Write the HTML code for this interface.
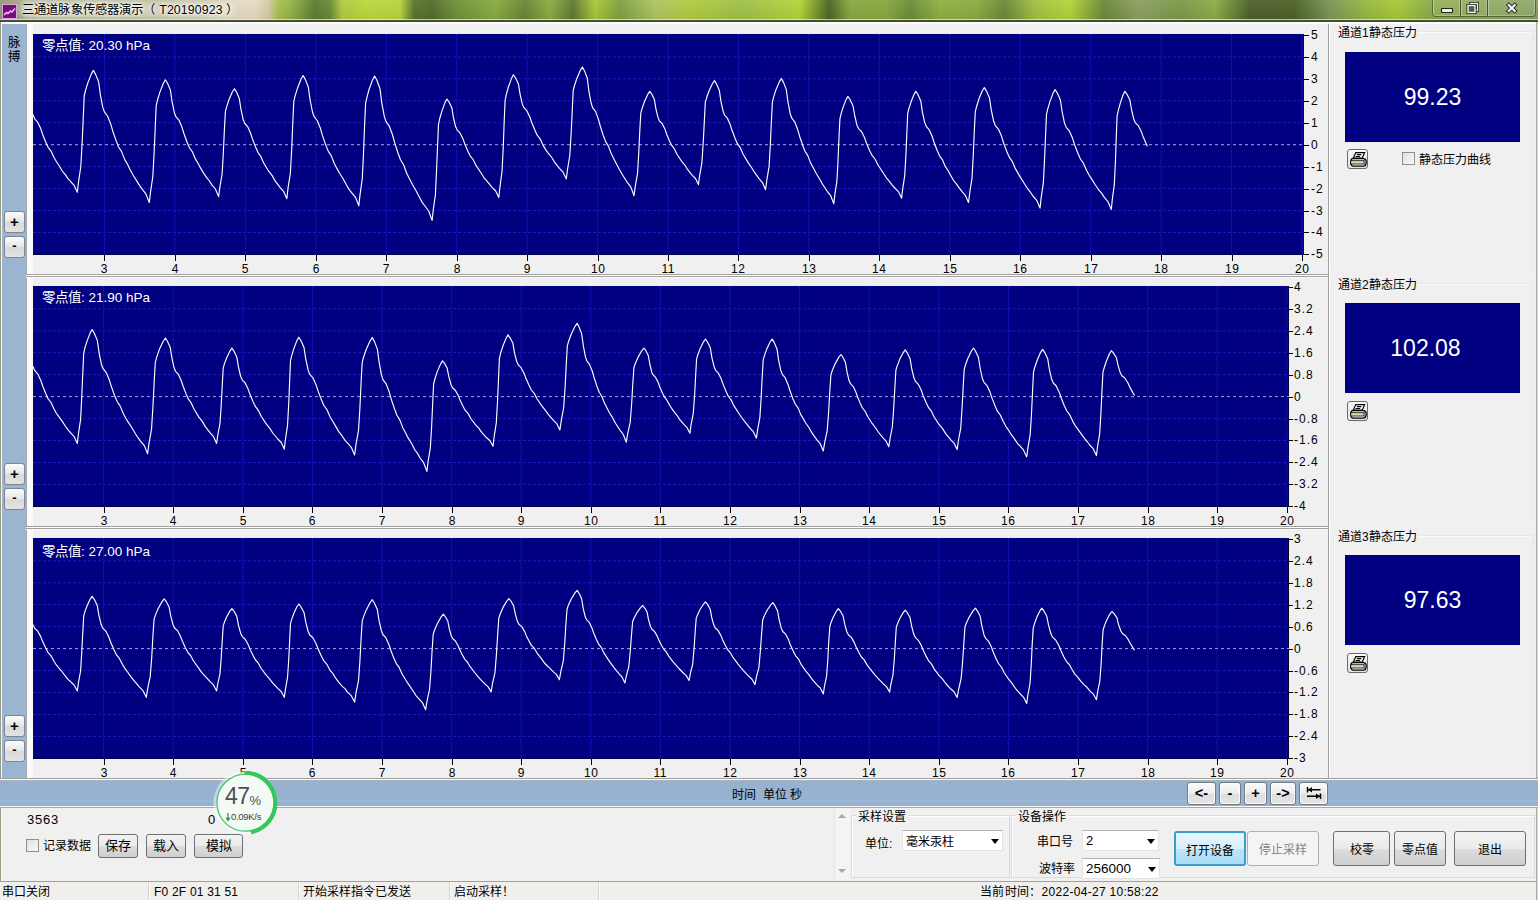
<!DOCTYPE html>
<html lang="zh-CN"><head><meta charset="utf-8">
<style>
*{margin:0;padding:0;box-sizing:border-box}
html,body{width:1538px;height:900px;overflow:hidden;background:#f0f0f0;font-family:"Liberation Sans", sans-serif;font-size:12px;color:#000}
.a{position:absolute}
#title{position:absolute;left:0;top:0;width:1538px;height:22px;
background:linear-gradient(90deg,#96987a 0px,#a4a484 15px,#acac8c 60px,#b4b294 150px,#c4c0a4 205px,#e4dcc4 235px,#e8dcc0 255px,#d4cca8 268px,#a8c050 278px,#98b448 290px,#7a9a3c 302px,#5c7c30 315px,#6a8a34 330px,#b0cc40 342px,#bcd83c 370px,#b8d440 400px,#5c742c 414px,#546c2c 432px,#6c9038 455px,#88ac40 495px,#6c8434 525px,#8cac40 550px,#607830 573px,#a8c838 595px,#80a040 620px,#aec460 655px,#b0cc40 690px,#a0c048 740px,#b4d438 800px,#4c6424 829px,#88a840 850px,#8aa840 885px,#6c8c38 910px,#90b040 940px,#8cac40 975px,#6c8838 1005px,#a0c040 1035px,#b4d438 1070px,#6c8838 1104px,#8ca060 1140px,#7c9848 1180px,#8cac48 1215px,#4c6028 1250px,#4e6229 1295px,#7c9458 1330px,#98b840 1367px,#a8c838 1398px,#8cac48 1428px,#8ca858 1480px,#88a060 1538px)}
#title:before{content:"";position:absolute;left:0;top:0;width:1538px;height:19px;background:linear-gradient(rgba(255,255,255,.06),rgba(0,0,0,.05))}
#tglow{position:absolute;left:20px;top:1px;width:215px;height:18px;border-radius:9px;background:rgba(235,235,220,.55);filter:blur(3px)}
#title:after{content:"";position:absolute;left:0;top:19px;width:1538px;height:3px;background:linear-gradient(rgba(230,240,200,.7) 33%,#505838 34%,#3c4430)}
#ttext{position:absolute;left:22px;top:3px;font-size:12.3px;line-height:15px;letter-spacing:0.15px;color:#000;text-shadow:0 0 6px #fff,0 0 4px #fff,0 0 2px #fff;white-space:nowrap}
#icon{position:absolute;left:2px;top:4px;width:15px;height:15px;background:#7a0a82;border:1px solid #d8a8d8}
.capb{position:absolute;top:0;height:17px;border:1px solid rgba(40,50,20,.55);border-top:none;background:rgba(255,255,255,.08);box-shadow:inset 1px 0 0 rgba(255,255,255,.35),inset -1px -1px 0 rgba(255,255,255,.25)}
#frameL{position:absolute;left:0;top:22px;width:2px;height:878px;background:linear-gradient(90deg,#9c9a84 50%,#f8f8f8 50%)}
#frameR{position:absolute;left:1536px;top:22px;width:2px;height:878px;background:linear-gradient(90deg,#909088,#f4f4f4)}
#side{position:absolute;left:2px;top:24px;width:24px;height:756px;background:#9bb4d0}
#sidetxt{position:absolute;left:8px;top:36px;width:14px;font-size:12.5px;line-height:14px;color:#000}
.sbtn{position:absolute;left:4px;width:21px;height:22px;border:1px solid #7a8694;border-radius:3px;background:linear-gradient(#fbfbfb,#e6e6e6 50%,#d9d9d9 51%,#e4e4e4);font-size:15px;font-weight:bold;line-height:19px;text-align:center;color:#000}
.sbtn.m{font-size:13px;line-height:18px}
.panel{position:absolute;left:26px;width:1303px;height:252px;background:#f0f0f0;border-left:1px solid #a4a8b0;box-shadow:inset 6px 0 0 #fafafa}
.psep{position:absolute;left:26px;width:1303px;height:4px;background:linear-gradient(#a0a0a0 25%,#fff 25%,#fff 50%,#a0a0a0 50%,#a0a0a0 75%,#fafafa 75%)}
.chart{position:absolute;background:#000080;overflow:hidden;border-bottom:1px solid #000048}
.chart svg{position:absolute;left:0;top:0}
.g{stroke:#1a1abc;stroke-width:1;stroke-dasharray:3 2}
.gv{stroke:#1616b8;stroke-width:1;stroke-dasharray:3 1}
.z{stroke:#a4a4f0;stroke-width:1;stroke-dasharray:3 3}
.w{fill:none;stroke:#fff;stroke-width:1.15;stroke-linejoin:round}
.tk{position:absolute;width:5px;height:1px;background:#000}
.tkb{position:absolute;width:1px;height:6px;background:#000}
.yl{position:absolute;font-size:12px;line-height:14px;color:#000;white-space:nowrap;letter-spacing:1px}
.xl{position:absolute;width:40px;text-align:center;font-size:12px;line-height:14px;color:#000;letter-spacing:0.4px;text-indent:0.4px}
.zval{position:absolute;left:42px;font-size:13.5px;line-height:14px;color:#fff;white-space:nowrap}
#rpanel{position:absolute;left:1328px;top:24px;width:208px;height:756px;background:#f0f0f0;border-left:1px solid #a0a0a0}
#rpanel:before{content:"";position:absolute;left:0;top:0;width:1px;height:758px;background:#fff}
.gbox{position:absolute;left:1333px;width:200px;border:1px solid #e6e6e6;border-bottom:none;box-shadow:inset 1px 1px 0 #fafafa}
.gtitle{background:#f0f0f0;padding:0 1px}
.gtitle{position:absolute;left:1337px;font-size:12px;line-height:14px;margin-top:1px;color:#000;white-space:nowrap}
.disp{position:absolute;left:1345px;width:175px;height:90px;background:#000080;color:#fff;font-size:23px;text-align:center;line-height:90px}
.pbtn{position:absolute;left:1347px;width:21px;height:20px;border:1px solid #6a6a6a;border-radius:3px;background:linear-gradient(#f8f8f8,#e4e4e4)}
.pbtn svg{position:absolute;left:1.5px;top:1.5px}
.chk{position:absolute;width:13px;height:13px;border:1px solid #8f8f8f;background:linear-gradient(135deg,#e0e0e0,#fafafa)}
.txt{position:absolute;font-size:12px;line-height:14px;white-space:nowrap;color:#000;margin-top:1px}
#tbar{position:absolute;left:0;top:778px;width:1538px;height:30px;background:linear-gradient(#a0a0a0 0,#a0a0a0 1px,#fafafa 1px,#fafafa 2px,#a8b4c0 2px,#a8b4c0 3px,#97b1d0 3px,#97b1d0 22px,#9cb6d6 22px,#9cb6d6 24px,#97b1d0 24px,#97b1d0 27px,#a4acb4 27px,#a4acb4 28px,#fafafa 28px,#fafafa 29px,#a8a8a8 29px)}
.nbtn{position:absolute;top:782px;height:23px;border:1px solid #6f7c8a;border-radius:3px;background:linear-gradient(#fafafa,#ececec 50%,#dcdcdc 51%,#e6e6e6);font-weight:bold;font-size:14.5px;line-height:20px;text-align:center;color:#000;box-shadow:inset 0 0 0 1px rgba(255,255,255,.8)}
.btn{position:absolute;height:35px;border:1px solid #707070;border-radius:3px;background:linear-gradient(#f2f2f2,#ebebeb 50%,#dddddd 51%,#cfcfcf);font-size:12px;line-height:36px;text-align:center;color:#000}
.sbtn2{position:absolute;top:834px;height:24px;border:1px solid #707070;border-radius:3px;background:linear-gradient(#f2f2f2,#ebebeb 50%,#dddddd 51%,#cfcfcf);font-size:13px;line-height:22px;text-align:center;color:#000}
.combo{position:absolute;height:21px;background:#fff;border:1px solid #e4e4e4;border-top-color:#b0b0b0;font-size:13px;line-height:19px;padding-left:3px;white-space:nowrap}
.combo:after{content:"";position:absolute;right:3px;top:8px;border-left:4px solid transparent;border-right:4px solid transparent;border-top:5px solid #000}
.grp{position:absolute;border:1px solid #dcdcdc;box-shadow:inset 1px 1px 0 #fff}
#status{position:absolute;left:0;top:881px;width:1536px;height:19px;background:#f0efec;border-top:1px solid #a0a0a0}
.st{position:absolute;top:885px;font-size:12px;line-height:14px;white-space:nowrap;color:#000}
</style></head><body>
<div id="title"><div id="icon"><svg width="13" height="13" viewBox="0 0 13 13" style="position:absolute;left:0;top:0"><path d="M1 10 L3.5 7.5 L5 8.5 L7.5 6 L9 7 L12 3.5" fill="none" stroke="#f0c8f0" stroke-width="1.5"/></svg></div>
<div id="tglow"></div><div id="ttext">三通道脉象传感器演示（ T20190923 ）</div>
<div class="capb" style="left:1432px;width:29px;border-radius:0 0 0 4px"></div><div class="capb" style="left:1460px;width:28px"></div><div class="capb" style="left:1487px;width:49px;border-radius:0 0 4px 0"></div>
<svg class="a" style="left:1432px;top:0" width="104" height="18" viewBox="0 0 104 18">
<rect x="9.5" y="8.5" width="11" height="4" fill="#eeeefa" stroke="#202818" stroke-width="1.2" rx="0.8"/>
<rect x="38.5" y="3.5" width="7" height="7" fill="none" stroke="#202818" stroke-width="3"/><rect x="38.5" y="3.5" width="7" height="7" fill="none" stroke="#eeeefa" stroke-width="1.4"/>
<rect x="36" y="5.5" width="7" height="7" fill="#52603a" stroke="#202818" stroke-width="3"/><rect x="36" y="5.5" width="7" height="7" fill="#52603a" stroke="#eeeefa" stroke-width="1.4"/>
<path d="M76.8 5 L82.8 11 M82.8 5 L76.8 11" stroke="#202818" stroke-width="4" stroke-linecap="square"/><path d="M76.8 5 L82.8 11 M82.8 5 L76.8 11" stroke="#f4f4fc" stroke-width="2.2" stroke-linecap="square"/>
</svg>
</div>
<div id="frameL"></div><div id="frameR"></div><div class="a" style="left:2px;top:22px;width:1534px;height:2px;background:#fbfbfb"></div>
<div id="side"></div>
<div id="sidetxt">脉<br>搏</div>
<div class="sbtn" style="top:211px">+</div><div class="sbtn m" style="top:236px">-</div><div class="sbtn" style="top:463px">+</div><div class="sbtn m" style="top:488px">-</div><div class="sbtn" style="top:715px">+</div><div class="sbtn m" style="top:740px">-</div>
<div class="panel" style="top:24px;height:250px"></div>
<div class="panel" style="top:277px"></div>
<div class="panel" style="top:529px"></div>
<div class="psep" style="top:274px"></div>
<div class="psep" style="top:526px"></div>
<div class="chart" style="left:33px;top:34px;width:1271px;height:221px"><svg width="1271" height="221" viewBox="0 0 1271 221"><line x1="0" y1="198.5" x2="1271.0" y2="198.5" class="g"/><line x1="0" y1="176.5" x2="1271.0" y2="176.5" class="g"/><line x1="0" y1="154.6" x2="1271.0" y2="154.6" class="g"/><line x1="0" y1="132.6" x2="1271.0" y2="132.6" class="g"/><line x1="0" y1="88.7" x2="1271.0" y2="88.7" class="g"/><line x1="0" y1="66.8" x2="1271.0" y2="66.8" class="g"/><line x1="0" y1="44.8" x2="1271.0" y2="44.8" class="g"/><line x1="0" y1="22.9" x2="1271.0" y2="22.9" class="g"/><line x1="71.5" y1="0" x2="71.5" y2="221.0" class="gv"/><line x1="141.9" y1="0" x2="141.9" y2="221.0" class="gv"/><line x1="212.4" y1="0" x2="212.4" y2="221.0" class="gv"/><line x1="282.8" y1="0" x2="282.8" y2="221.0" class="gv"/><line x1="353.3" y1="0" x2="353.3" y2="221.0" class="gv"/><line x1="423.7" y1="0" x2="423.7" y2="221.0" class="gv"/><line x1="494.1" y1="0" x2="494.1" y2="221.0" class="gv"/><line x1="564.6" y1="0" x2="564.6" y2="221.0" class="gv"/><line x1="635.0" y1="0" x2="635.0" y2="221.0" class="gv"/><line x1="705.5" y1="0" x2="705.5" y2="221.0" class="gv"/><line x1="775.9" y1="0" x2="775.9" y2="221.0" class="gv"/><line x1="846.3" y1="0" x2="846.3" y2="221.0" class="gv"/><line x1="916.8" y1="0" x2="916.8" y2="221.0" class="gv"/><line x1="987.2" y1="0" x2="987.2" y2="221.0" class="gv"/><line x1="1057.7" y1="0" x2="1057.7" y2="221.0" class="gv"/><line x1="1128.1" y1="0" x2="1128.1" y2="221.0" class="gv"/><line x1="1198.5" y1="0" x2="1198.5" y2="221.0" class="gv"/><line x1="1269.0" y1="0" x2="1269.0" y2="221.0" class="gv"/><line x1="0" y1="110.7" x2="1271.0" y2="110.7" class="z"/><g transform="translate(-33,-34)"><path d="M33.0,114.3 33.2,115.2 34.8,119.1 37.7,122.2 40.7,128.6 42.7,134.5 45.7,142.0 48.1,147.3 51.0,151.1 54.0,157.5 56.5,161.8 59.0,165.5 62.3,171.0 65.6,175.2 68.2,178.9 70.7,181.6 74.1,185.3 77.3,192.3 78.6,181.3 80.8,166.7 82.1,143.5 83.3,116.7 84.2,96.0 85.5,90.5 87.9,82.6 91.3,74.1 93.4,70.4 95.6,74.4 98.7,82.0 100.4,95.2 102.8,107.4 104.5,112.1 107.5,116.0 110.7,123.9 112.8,131.2 116.0,140.4 118.6,147.0 121.6,151.6 124.7,159.6 127.4,164.0 130.0,169.5 133.5,175.8 137.0,181.4 139.7,185.6 142.3,189.3 145.9,193.9 149.3,202.5 150.6,191.5 152.8,176.7 154.1,153.4 155.3,126.4 156.2,105.6 157.5,100.0 159.9,92.1 163.3,83.5 165.4,79.8 167.5,83.3 170.4,90.1 172.1,101.8 174.3,112.5 175.9,116.7 178.9,120.1 181.9,127.1 183.9,133.5 186.9,141.7 189.3,147.5 192.2,151.6 195.2,158.6 197.7,162.8 200.2,167.4 203.6,173.1 206.9,177.9 209.4,181.0 211.9,184.9 215.4,189.0 218.6,196.6 219.9,186.9 222.1,174.0 223.3,153.5 224.4,129.8 225.4,111.4 226.7,106.6 229.0,99.6 232.3,92.0 234.4,88.8 236.5,92.1 239.3,98.5 241.0,109.5 243.2,119.6 244.8,123.5 247.7,126.7 250.6,133.3 252.6,139.4 255.6,147.0 258.0,152.5 260.8,156.4 263.7,163.0 268.7,171.2 272.0,175.4 275.3,181.1 280.2,187.7 283.7,191.6 286.8,198.7 288.1,187.6 290.4,172.8 291.7,149.4 292.8,122.3 293.8,101.4 295.1,95.8 297.6,87.8 301.0,79.2 303.1,75.5 305.3,79.4 308.3,87.0 310.1,100.0 312.5,112.0 314.1,116.7 317.2,120.5 320.4,128.3 322.4,135.4 325.6,144.6 328.2,151.1 331.2,155.6 334.3,163.5 336.9,168.4 339.6,173.2 343.1,178.7 346.5,185.0 349.2,189.6 351.8,192.8 355.5,197.3 358.8,205.8 360.1,194.1 362.3,178.5 363.5,153.9 364.6,125.3 365.6,103.3 366.9,97.4 369.2,89.0 372.5,79.9 374.6,76.0 376.9,80.3 380.0,88.7 381.8,103.1 384.3,116.4 386.0,121.6 389.1,125.8 392.4,134.5 394.6,142.4 397.8,152.5 400.5,159.8 403.6,164.8 406.8,173.5 409.5,178.8 412.3,184.3 415.9,190.5 419.5,197.3 422.2,202.4 424.9,206.0 428.7,211.0 432.1,220.4 433.3,209.5 435.4,194.9 436.5,171.8 437.6,145.1 438.5,124.5 439.6,119.0 441.9,111.1 445.0,102.6 446.9,99.0 449.0,102.0 451.8,107.7 453.4,117.5 455.6,126.6 457.2,130.1 460.0,132.9 463.0,138.9 464.9,144.3 467.9,151.2 470.3,156.1 473.1,159.5 476.0,165.4 480.9,172.8 484.1,177.8 487.4,181.7 492.3,187.6 495.7,191.0 498.8,197.4 500.0,186.4 502.0,171.6 503.2,148.3 504.2,121.3 505.1,100.5 506.2,94.9 508.4,87.0 511.5,78.4 513.4,74.7 515.5,77.8 518.4,83.9 520.1,94.3 522.3,103.9 523.9,107.7 526.8,110.7 529.8,116.9 531.8,122.7 534.8,130.0 537.2,135.2 540.1,138.8 543.0,145.1 545.5,149.4 548.0,152.9 551.4,157.0 554.7,162.3 557.2,165.7 559.7,168.6 563.1,172.2 566.3,179.0 567.6,168.9 569.8,155.5 571.1,134.2 572.3,109.6 573.2,90.5 574.5,85.5 576.9,78.2 580.3,70.4 582.4,67.0 584.5,70.9 587.3,78.3 588.9,91.2 591.1,103.0 592.6,107.6 595.5,111.4 598.4,119.1 600.3,126.2 603.2,135.2 605.6,141.6 608.4,146.1 611.3,153.8 616.2,163.4 619.4,169.5 622.6,175.0 627.5,182.7 630.9,187.2 634.0,195.6 635.3,186.2 637.5,173.7 638.7,153.9 639.8,130.9 640.8,113.2 642.1,108.5 644.4,101.7 647.7,94.4 649.8,91.3 651.7,94.1 654.4,99.5 655.9,108.8 658.0,117.4 659.4,120.8 662.1,123.5 664.9,129.1 666.7,134.2 669.4,140.7 671.7,145.4 674.3,148.7 677.0,154.3 681.6,161.3 684.7,164.8 687.7,169.7 692.3,175.3 695.5,178.5 698.4,184.6 699.7,175.2 701.9,162.8 703.2,143.0 704.4,120.1 705.3,102.4 706.6,97.8 709.0,91.0 712.4,83.7 714.5,80.6 716.5,83.9 719.3,90.2 720.9,101.1 723.1,111.1 724.6,115.1 727.4,118.2 730.3,124.8 732.2,130.8 735.1,138.4 737.5,143.9 740.3,147.7 743.1,154.2 748.0,162.4 751.2,167.0 754.4,172.2 759.2,178.8 762.5,182.6 765.6,189.7 766.9,179.7 769.1,166.4 770.3,145.3 771.4,120.8 772.4,101.9 773.7,96.9 776.0,89.7 779.3,81.9 781.4,78.6 783.5,82.4 786.3,89.6 788.0,102.1 790.2,113.7 791.8,118.2 794.7,121.8 797.6,129.3 799.6,136.2 802.6,145.0 805.0,151.2 807.8,155.6 810.7,163.1 815.7,172.5 819.0,178.0 822.3,183.8 827.2,191.3 830.7,195.7 833.8,203.8 834.9,194.1 836.9,181.2 838.0,160.8 839.0,137.2 839.9,119.0 841.0,114.1 843.1,107.1 846.1,99.6 847.9,96.4 850.0,99.5 852.9,105.4 854.7,115.5 856.9,124.9 858.5,128.6 861.5,131.5 864.5,137.6 866.5,143.2 869.6,150.4 872.1,155.4 875.0,159.0 878.0,165.1 880.5,168.8 883.1,172.8 886.4,177.9 889.8,181.9 892.3,185.3 894.9,188.0 898.4,191.6 901.6,198.2 902.7,188.6 904.7,175.8 905.9,155.4 906.9,131.9 907.7,113.7 908.8,108.9 911.0,102.0 914.0,94.5 915.8,91.3 917.9,94.6 920.8,101.1 922.4,112.2 924.7,122.4 926.2,126.4 929.1,129.7 932.1,136.3 934.1,142.5 937.1,150.2 939.5,155.8 942.4,159.7 945.3,166.4 947.8,170.3 950.3,174.7 953.6,180.5 956.9,184.7 959.4,188.2 961.9,191.4 965.3,195.3 968.5,202.5 969.8,192.2 972.0,178.3 973.2,156.5 974.3,131.2 975.3,111.6 976.6,106.5 978.9,99.0 982.2,91.0 984.3,87.5 986.5,91.1 989.5,98.1 991.3,110.2 993.7,121.3 995.3,125.6 998.4,129.1 1001.6,136.3 1003.6,143.0 1006.8,151.4 1009.4,157.4 1012.4,161.7 1015.5,168.9 1018.1,173.4 1020.8,177.9 1024.3,183.5 1027.7,188.8 1030.4,192.2 1033.0,196.0 1036.7,200.3 1040.0,208.1 1041.2,197.4 1043.3,183.2 1044.5,160.7 1045.6,134.6 1046.5,114.4 1047.7,109.1 1050.0,101.4 1053.1,93.1 1055.1,89.5 1057.3,93.1 1060.4,100.1 1062.2,112.0 1064.5,123.1 1066.2,127.4 1069.3,130.9 1072.5,138.1 1074.6,144.7 1077.8,153.0 1080.4,159.0 1083.4,163.2 1086.6,170.4 1089.2,175.3 1091.9,179.4 1095.4,185.0 1098.9,190.2 1101.6,193.1 1104.3,197.4 1107.9,201.6 1111.3,209.4 1112.4,198.8 1114.3,184.6 1115.4,162.2 1116.3,136.2 1117.1,116.1 1118.2,110.8 1120.3,103.1 1123.1,94.8 1124.9,91.3 1127.0,94.3 1129.9,100.1 1131.6,110.0 1133.8,119.2 1135.4,122.8 1138.3,125.7 1141.3,131.6 1143.3,137.1 1146.3,144.1 1147.4,146.3" class="w"/></g></svg></div>
<div class="tk" style="left:1304px;top:35px;width:5px"></div>
<div class="yl" style="left:1311px;top:28px">5</div>
<div class="tk" style="left:1304px;top:57px;width:5px"></div>
<div class="yl" style="left:1311px;top:50px">4</div>
<div class="tk" style="left:1304px;top:79px;width:5px"></div>
<div class="yl" style="left:1311px;top:72px">3</div>
<div class="tk" style="left:1304px;top:101px;width:5px"></div>
<div class="yl" style="left:1311px;top:94px">2</div>
<div class="tk" style="left:1304px;top:123px;width:5px"></div>
<div class="yl" style="left:1311px;top:116px">1</div>
<div class="tk" style="left:1304px;top:145px;width:5px"></div>
<div class="yl" style="left:1311px;top:138px">0</div>
<div class="tk" style="left:1304px;top:167px;width:5px"></div>
<div class="yl" style="left:1311px;top:160px">-1</div>
<div class="tk" style="left:1304px;top:189px;width:5px"></div>
<div class="yl" style="left:1311px;top:182px">-2</div>
<div class="tk" style="left:1304px;top:211px;width:5px"></div>
<div class="yl" style="left:1311px;top:204px">-3</div>
<div class="tk" style="left:1304px;top:232px;width:5px"></div>
<div class="yl" style="left:1311px;top:225px">-4</div>
<div class="tk" style="left:1304px;top:254px;width:5px"></div>
<div class="yl" style="left:1311px;top:247px">-5</div>
<div class="tkb" style="left:104px;top:255px"></div>
<div class="xl" style="left:84px;top:262px">3</div>
<div class="tkb" style="left:175px;top:255px"></div>
<div class="xl" style="left:155px;top:262px">4</div>
<div class="tkb" style="left:245px;top:255px"></div>
<div class="xl" style="left:225px;top:262px">5</div>
<div class="tkb" style="left:316px;top:255px"></div>
<div class="xl" style="left:296px;top:262px">6</div>
<div class="tkb" style="left:386px;top:255px"></div>
<div class="xl" style="left:366px;top:262px">7</div>
<div class="tkb" style="left:457px;top:255px"></div>
<div class="xl" style="left:437px;top:262px">8</div>
<div class="tkb" style="left:527px;top:255px"></div>
<div class="xl" style="left:507px;top:262px">9</div>
<div class="tkb" style="left:598px;top:255px"></div>
<div class="xl" style="left:578px;top:262px">10</div>
<div class="tkb" style="left:668px;top:255px"></div>
<div class="xl" style="left:648px;top:262px">11</div>
<div class="tkb" style="left:738px;top:255px"></div>
<div class="xl" style="left:718px;top:262px">12</div>
<div class="tkb" style="left:809px;top:255px"></div>
<div class="xl" style="left:789px;top:262px">13</div>
<div class="tkb" style="left:879px;top:255px"></div>
<div class="xl" style="left:859px;top:262px">14</div>
<div class="tkb" style="left:950px;top:255px"></div>
<div class="xl" style="left:930px;top:262px">15</div>
<div class="tkb" style="left:1020px;top:255px"></div>
<div class="xl" style="left:1000px;top:262px">16</div>
<div class="tkb" style="left:1091px;top:255px"></div>
<div class="xl" style="left:1071px;top:262px">17</div>
<div class="tkb" style="left:1161px;top:255px"></div>
<div class="xl" style="left:1141px;top:262px">18</div>
<div class="tkb" style="left:1232px;top:255px"></div>
<div class="xl" style="left:1212px;top:262px">19</div>
<div class="tkb" style="left:1302px;top:255px"></div>
<div class="xl" style="left:1282px;top:262px">20</div>
<div class="chart" style="left:33px;top:286px;width:1256px;height:221px"><svg width="1256" height="221" viewBox="0 0 1256 221"><line x1="0" y1="198.4" x2="1256.0" y2="198.4" class="g"/><line x1="0" y1="176.5" x2="1256.0" y2="176.5" class="g"/><line x1="0" y1="154.5" x2="1256.0" y2="154.5" class="g"/><line x1="0" y1="132.6" x2="1256.0" y2="132.6" class="g"/><line x1="0" y1="88.7" x2="1256.0" y2="88.7" class="g"/><line x1="0" y1="66.7" x2="1256.0" y2="66.7" class="g"/><line x1="0" y1="44.8" x2="1256.0" y2="44.8" class="g"/><line x1="0" y1="22.8" x2="1256.0" y2="22.8" class="g"/><line x1="70.6" y1="0" x2="70.6" y2="221.0" class="gv"/><line x1="140.2" y1="0" x2="140.2" y2="221.0" class="gv"/><line x1="209.8" y1="0" x2="209.8" y2="221.0" class="gv"/><line x1="279.4" y1="0" x2="279.4" y2="221.0" class="gv"/><line x1="349.0" y1="0" x2="349.0" y2="221.0" class="gv"/><line x1="418.6" y1="0" x2="418.6" y2="221.0" class="gv"/><line x1="488.2" y1="0" x2="488.2" y2="221.0" class="gv"/><line x1="557.8" y1="0" x2="557.8" y2="221.0" class="gv"/><line x1="627.4" y1="0" x2="627.4" y2="221.0" class="gv"/><line x1="697.0" y1="0" x2="697.0" y2="221.0" class="gv"/><line x1="766.6" y1="0" x2="766.6" y2="221.0" class="gv"/><line x1="836.2" y1="0" x2="836.2" y2="221.0" class="gv"/><line x1="905.8" y1="0" x2="905.8" y2="221.0" class="gv"/><line x1="975.4" y1="0" x2="975.4" y2="221.0" class="gv"/><line x1="1045.0" y1="0" x2="1045.0" y2="221.0" class="gv"/><line x1="1114.6" y1="0" x2="1114.6" y2="221.0" class="gv"/><line x1="1184.2" y1="0" x2="1184.2" y2="221.0" class="gv"/><line x1="1253.8" y1="0" x2="1253.8" y2="221.0" class="gv"/><line x1="1255.4" y1="0" x2="1255.4" y2="221.0" stroke="#000018" stroke-width="1.2" stroke-dasharray="2 1"/><line x1="0" y1="110.6" x2="1256.0" y2="110.6" class="z"/><g transform="translate(-33,-286)"><path d="M33.0,366.0 33.2,366.9 34.8,370.7 37.7,373.8 40.7,380.2 42.7,386.0 45.7,393.5 48.1,398.8 51.0,402.5 54.0,408.9 56.5,413.5 59.0,416.9 62.3,421.4 65.6,426.5 68.2,430.2 70.7,432.9 74.1,436.6 77.3,443.5 78.5,433.2 80.6,419.6 81.7,397.9 82.8,372.8 83.7,353.4 84.8,348.3 87.1,340.9 90.2,332.9 92.1,329.5 94.3,333.2 97.3,340.4 99.1,352.8 101.4,364.3 103.1,368.7 106.1,372.3 109.3,379.8 111.4,386.6 114.5,395.3 117.1,401.5 120.1,405.9 123.2,413.3 125.8,418.3 128.5,422.6 131.9,427.8 135.4,433.8 138.0,437.7 140.7,441.3 144.3,445.6 147.6,453.7 149.0,443.3 151.5,429.4 152.9,407.4 154.2,382.0 155.3,362.3 156.7,357.1 159.3,349.6 163.1,341.5 165.4,338.0 167.4,341.2 170.2,347.3 171.9,357.8 174.0,367.5 175.5,371.3 178.4,374.4 181.3,380.7 183.2,386.5 186.1,393.9 188.4,399.2 191.2,402.9 194.1,409.2 198.9,417.1 202.1,421.1 205.3,426.6 210.2,432.9 213.5,436.6 216.6,443.5 217.8,434.9 220.0,423.5 221.2,405.4 222.3,384.4 223.2,368.2 224.4,363.9 226.7,357.7 229.9,351.1 231.9,348.2 234.0,351.2 236.8,357.1 238.5,367.2 240.7,376.5 242.3,380.1 245.2,383.0 248.1,389.1 250.1,394.6 253.1,401.7 255.5,406.7 258.3,410.3 261.2,416.3 266.2,423.9 269.5,427.9 272.8,433.0 277.8,439.0 281.2,442.5 284.3,449.1 285.5,439.0 287.5,425.6 288.7,404.3 289.7,379.7 290.5,360.7 291.7,355.7 293.9,348.4 296.9,340.6 298.8,337.2 301.0,340.7 304.0,347.6 305.8,359.3 308.2,370.2 309.8,374.4 312.9,377.8 316.1,384.9 318.2,391.4 321.3,399.6 323.9,405.5 326.9,409.6 330.0,416.7 332.7,421.2 335.3,425.6 338.8,431.6 342.3,436.2 345.0,440.4 347.6,443.2 351.3,447.3 354.6,455.0 356.0,444.4 358.5,430.3 359.9,408.0 361.1,382.2 362.2,362.3 363.6,357.0 366.3,349.3 370.0,341.1 372.3,337.6 374.5,341.6 377.4,349.4 379.2,362.8 381.5,375.1 383.1,379.9 386.1,383.8 389.2,391.8 391.2,399.1 394.4,408.5 396.9,415.2 399.8,419.9 402.9,427.9 405.5,432.7 408.1,437.9 411.5,443.2 414.9,450.0 417.5,453.4 420.1,458.0 423.6,462.7 426.9,471.4 428.1,461.4 430.3,448.2 431.6,427.2 432.7,402.8 433.6,384.0 434.9,379.0 437.2,371.9 440.5,364.1 442.5,360.8 444.5,363.4 447.2,368.3 448.9,376.9 451.0,384.7 452.5,387.8 455.3,390.3 458.2,395.4 460.0,400.1 462.9,406.1 465.2,410.4 468.0,413.4 470.8,418.5 475.6,424.9 478.7,428.1 481.9,432.6 486.7,437.8 490.0,440.7 493.0,446.3 494.2,436.3 496.3,422.9 497.5,401.7 498.6,377.2 499.4,358.3 500.6,353.3 502.9,346.0 506.1,338.2 508.0,334.9 510.1,337.8 512.9,343.3 514.5,352.8 516.7,361.5 518.3,364.9 521.1,367.7 524.1,373.4 526.0,378.6 529.0,385.2 531.4,390.0 534.2,393.3 537.1,399.0 542.0,406.1 545.2,410.2 548.5,414.7 553.4,420.4 556.8,423.7 559.9,429.9 561.3,420.3 563.7,407.5 565.1,387.3 566.3,363.9 567.3,345.8 568.7,341.0 571.3,334.0 574.9,326.6 577.1,323.4 579.1,327.0 581.7,333.9 583.3,345.7 585.4,356.7 586.8,360.9 589.5,364.4 592.4,371.5 594.2,378.0 597.0,386.4 599.2,392.3 601.9,396.5 604.7,403.6 609.3,412.5 612.4,417.4 615.5,423.2 620.1,430.3 623.3,434.5 626.3,442.2 627.7,433.7 630.2,422.4 631.6,404.5 632.8,383.8 633.9,367.8 635.3,363.5 638.0,357.4 641.7,350.8 644.0,348.0 645.8,350.6 648.3,355.5 649.8,364.0 651.7,371.9 653.1,374.9 655.6,377.4 658.2,382.5 659.9,387.2 662.5,393.2 664.7,397.4 667.1,400.4 669.7,405.5 674.1,411.9 676.9,415.3 679.8,419.6 684.2,424.7 687.1,427.7 689.9,433.2 691.1,424.7 693.3,413.4 694.6,395.5 695.7,374.8 696.6,358.8 697.9,354.5 700.2,348.4 703.5,341.8 705.5,339.0 707.5,342.0 710.3,347.7 711.9,357.6 714.1,366.7 715.6,370.3 718.4,373.2 721.3,379.1 723.2,384.6 726.1,391.5 728.4,396.5 731.2,399.9 734.0,405.9 738.8,413.3 742.0,418.0 745.2,422.2 750.0,428.2 753.3,431.7 756.4,438.1 757.7,429.2 759.9,417.3 761.1,398.5 762.2,376.7 763.2,359.8 764.5,355.4 766.8,348.9 770.1,342.0 772.2,339.0 774.2,342.4 777.0,348.9 778.6,360.1 780.8,370.4 782.3,374.4 785.1,377.6 788.0,384.4 789.9,390.5 792.8,398.4 795.2,404.0 798.0,407.9 800.8,414.6 805.7,423.0 808.9,427.5 812.1,433.1 816.9,439.8 820.2,443.7 823.3,451.0 824.7,442.3 827.2,430.7 828.6,412.4 829.8,391.2 830.9,374.8 832.3,370.4 835.0,364.1 838.7,357.4 841.0,354.5 842.9,357.3 845.5,362.6 847.0,371.9 849.0,380.3 850.5,383.7 853.1,386.3 855.8,391.9 857.6,397.0 860.3,403.4 862.5,408.0 865.1,411.3 867.8,416.8 872.3,423.7 875.3,427.5 878.3,432.0 882.8,437.6 885.9,440.8 888.8,446.8 890.1,438.1 892.4,426.5 893.7,408.0 894.9,386.7 895.9,370.2 897.2,365.9 899.6,359.6 903.1,352.8 905.2,349.9 907.3,352.9 910.1,358.7 911.7,368.6 913.9,377.8 915.5,381.4 918.3,384.3 921.3,390.3 923.2,395.8 926.2,402.7 928.6,407.7 931.4,411.2 934.3,417.2 939.2,424.7 942.4,428.4 945.7,433.6 950.6,439.6 954.0,443.1 957.1,449.6 958.4,440.5 960.7,428.3 962.0,409.0 963.2,386.6 964.2,369.3 965.5,364.8 967.9,358.2 971.4,351.0 973.5,348.0 975.6,351.3 978.5,357.6 980.2,368.5 982.4,378.5 984.0,382.4 987.0,385.6 990.0,392.1 992.0,398.1 995.0,405.8 997.4,411.2 1000.3,415.0 1003.3,421.6 1005.8,426.3 1008.3,429.8 1011.7,435.2 1015.0,439.6 1017.5,443.5 1020.1,446.1 1023.5,449.9 1026.7,457.0 1028.0,447.3 1030.2,434.4 1031.5,414.0 1032.6,390.3 1033.5,372.0 1034.8,367.2 1037.2,360.2 1040.5,352.6 1042.6,349.4 1044.8,352.6 1047.7,358.7 1049.4,369.4 1051.6,379.1 1053.3,383.0 1056.2,386.0 1059.3,392.4 1061.3,398.3 1064.3,405.7 1066.8,411.0 1069.7,414.7 1072.7,421.1 1075.3,425.8 1077.8,429.1 1081.2,433.9 1084.6,438.6 1087.1,441.5 1089.7,445.0 1093.2,448.7 1096.4,455.6 1097.6,446.2 1099.7,433.6 1100.9,413.6 1102.0,390.6 1102.9,372.7 1104.1,368.0 1106.3,361.2 1109.5,353.8 1111.4,350.7 1113.5,353.1 1116.4,357.7 1118.1,365.6 1120.3,372.8 1121.9,375.7 1124.8,378.0 1127.8,382.7 1129.8,387.1 1132.8,392.6 1134.6,395.5" class="w"/></g></svg></div>
<div class="tk" style="left:1289px;top:287px;width:4px"></div>
<div class="yl" style="left:1294px;top:280px">4</div>
<div class="tk" style="left:1289px;top:309px;width:4px"></div>
<div class="yl" style="left:1294px;top:302px">3.2</div>
<div class="tk" style="left:1289px;top:331px;width:4px"></div>
<div class="yl" style="left:1294px;top:324px">2.4</div>
<div class="tk" style="left:1289px;top:353px;width:4px"></div>
<div class="yl" style="left:1294px;top:346px">1.6</div>
<div class="tk" style="left:1289px;top:375px;width:4px"></div>
<div class="yl" style="left:1294px;top:368px">0.8</div>
<div class="tk" style="left:1289px;top:397px;width:4px"></div>
<div class="yl" style="left:1294px;top:390px">0</div>
<div class="tk" style="left:1289px;top:419px;width:4px"></div>
<div class="yl" style="left:1294px;top:412px">-0.8</div>
<div class="tk" style="left:1289px;top:440px;width:4px"></div>
<div class="yl" style="left:1294px;top:433px">-1.6</div>
<div class="tk" style="left:1289px;top:462px;width:4px"></div>
<div class="yl" style="left:1294px;top:455px">-2.4</div>
<div class="tk" style="left:1289px;top:484px;width:4px"></div>
<div class="yl" style="left:1294px;top:477px">-3.2</div>
<div class="tk" style="left:1289px;top:506px;width:4px"></div>
<div class="yl" style="left:1294px;top:499px">-4</div>
<div class="tkb" style="left:104px;top:507px"></div>
<div class="xl" style="left:84px;top:514px">3</div>
<div class="tkb" style="left:173px;top:507px"></div>
<div class="xl" style="left:153px;top:514px">4</div>
<div class="tkb" style="left:243px;top:507px"></div>
<div class="xl" style="left:223px;top:514px">5</div>
<div class="tkb" style="left:312px;top:507px"></div>
<div class="xl" style="left:292px;top:514px">6</div>
<div class="tkb" style="left:382px;top:507px"></div>
<div class="xl" style="left:362px;top:514px">7</div>
<div class="tkb" style="left:452px;top:507px"></div>
<div class="xl" style="left:432px;top:514px">8</div>
<div class="tkb" style="left:521px;top:507px"></div>
<div class="xl" style="left:501px;top:514px">9</div>
<div class="tkb" style="left:591px;top:507px"></div>
<div class="xl" style="left:571px;top:514px">10</div>
<div class="tkb" style="left:660px;top:507px"></div>
<div class="xl" style="left:640px;top:514px">11</div>
<div class="tkb" style="left:730px;top:507px"></div>
<div class="xl" style="left:710px;top:514px">12</div>
<div class="tkb" style="left:800px;top:507px"></div>
<div class="xl" style="left:780px;top:514px">13</div>
<div class="tkb" style="left:869px;top:507px"></div>
<div class="xl" style="left:849px;top:514px">14</div>
<div class="tkb" style="left:939px;top:507px"></div>
<div class="xl" style="left:919px;top:514px">15</div>
<div class="tkb" style="left:1008px;top:507px"></div>
<div class="xl" style="left:988px;top:514px">16</div>
<div class="tkb" style="left:1078px;top:507px"></div>
<div class="xl" style="left:1058px;top:514px">17</div>
<div class="tkb" style="left:1148px;top:507px"></div>
<div class="xl" style="left:1128px;top:514px">18</div>
<div class="tkb" style="left:1217px;top:507px"></div>
<div class="xl" style="left:1197px;top:514px">19</div>
<div class="tkb" style="left:1287px;top:507px"></div>
<div class="xl" style="left:1267px;top:514px">20</div>
<div class="chart" style="left:33px;top:538px;width:1256px;height:221px"><svg width="1256" height="221" viewBox="0 0 1256 221"><line x1="0" y1="198.4" x2="1256.0" y2="198.4" class="g"/><line x1="0" y1="176.5" x2="1256.0" y2="176.5" class="g"/><line x1="0" y1="154.5" x2="1256.0" y2="154.5" class="g"/><line x1="0" y1="132.6" x2="1256.0" y2="132.6" class="g"/><line x1="0" y1="88.6" x2="1256.0" y2="88.6" class="g"/><line x1="0" y1="66.7" x2="1256.0" y2="66.7" class="g"/><line x1="0" y1="44.8" x2="1256.0" y2="44.8" class="g"/><line x1="0" y1="22.8" x2="1256.0" y2="22.8" class="g"/><line x1="70.6" y1="0" x2="70.6" y2="221.0" class="gv"/><line x1="140.2" y1="0" x2="140.2" y2="221.0" class="gv"/><line x1="209.8" y1="0" x2="209.8" y2="221.0" class="gv"/><line x1="279.4" y1="0" x2="279.4" y2="221.0" class="gv"/><line x1="349.0" y1="0" x2="349.0" y2="221.0" class="gv"/><line x1="418.6" y1="0" x2="418.6" y2="221.0" class="gv"/><line x1="488.2" y1="0" x2="488.2" y2="221.0" class="gv"/><line x1="557.8" y1="0" x2="557.8" y2="221.0" class="gv"/><line x1="627.4" y1="0" x2="627.4" y2="221.0" class="gv"/><line x1="697.0" y1="0" x2="697.0" y2="221.0" class="gv"/><line x1="766.6" y1="0" x2="766.6" y2="221.0" class="gv"/><line x1="836.2" y1="0" x2="836.2" y2="221.0" class="gv"/><line x1="905.8" y1="0" x2="905.8" y2="221.0" class="gv"/><line x1="975.4" y1="0" x2="975.4" y2="221.0" class="gv"/><line x1="1045.0" y1="0" x2="1045.0" y2="221.0" class="gv"/><line x1="1114.6" y1="0" x2="1114.6" y2="221.0" class="gv"/><line x1="1184.2" y1="0" x2="1184.2" y2="221.0" class="gv"/><line x1="1253.8" y1="0" x2="1253.8" y2="221.0" class="gv"/><line x1="1255.4" y1="0" x2="1255.4" y2="221.0" stroke="#000018" stroke-width="1.2" /><line x1="0" y1="110.6" x2="1256.0" y2="110.6" class="z"/><g transform="translate(-33,-538)"><path d="M33.0,624.4 33.2,625.2 34.8,628.5 37.7,631.1 40.7,636.6 42.7,641.6 45.7,648.0 48.1,652.6 51.0,655.8 54.0,661.2 56.5,665.2 59.0,668.1 62.3,672.0 65.6,676.3 68.2,679.6 70.7,681.8 74.1,685.0 77.3,690.9 78.5,682.4 80.6,671.0 81.7,653.1 82.8,632.2 83.7,616.2 84.8,611.9 87.1,605.8 90.2,599.1 92.1,596.3 94.3,599.3 97.2,605.2 98.9,615.3 101.2,624.6 102.8,628.2 105.8,631.1 108.9,637.2 110.9,642.8 114.0,649.8 116.5,654.9 119.4,658.4 122.5,664.5 125.0,668.6 127.6,672.0 131.0,676.9 134.4,681.1 137.0,684.2 139.5,687.2 143.0,690.7 146.3,697.3 147.7,688.4 150.2,676.6 151.7,657.9 152.9,636.3 154.0,619.6 155.4,615.1 158.1,608.7 161.9,601.9 164.2,598.9 166.3,601.7 169.1,607.0 170.8,616.2 173.0,624.7 174.6,628.0 177.5,630.6 180.4,636.2 182.4,641.2 185.4,647.7 187.8,652.3 190.6,655.5 193.5,661.0 198.5,667.9 201.8,672.7 205.1,676.2 210.1,681.7 213.5,684.9 216.6,690.9 217.8,683.5 220.0,673.6 221.2,658.0 222.3,639.9 223.2,625.9 224.4,622.2 226.7,616.8 229.9,611.1 231.9,608.6 234.0,611.3 236.8,616.4 238.5,625.3 240.7,633.4 242.3,636.6 245.2,639.2 248.1,644.5 250.1,649.4 253.1,655.6 255.5,660.0 258.3,663.2 261.2,668.5 266.2,675.1 269.5,678.8 272.8,683.1 277.8,688.4 281.2,691.5 284.3,697.3 285.5,688.9 287.5,677.7 288.7,660.0 289.7,639.5 290.5,623.6 291.7,619.4 293.9,613.3 296.9,606.8 298.8,604.0 301.0,606.9 304.0,612.6 305.8,622.4 308.2,631.5 309.8,635.0 312.9,637.8 316.1,643.7 318.2,649.1 321.3,656.0 323.9,660.9 326.9,664.3 330.0,670.2 332.7,673.3 335.3,677.6 338.8,682.3 342.3,686.4 345.0,688.6 347.6,692.3 351.3,695.7 354.6,702.1 356.0,692.9 358.5,680.6 359.9,661.1 361.1,638.6 362.2,621.2 363.6,616.6 366.3,609.9 370.0,602.8 372.3,599.7 374.4,603.0 377.3,609.4 379.0,620.4 381.3,630.5 382.9,634.5 385.8,637.7 388.8,644.3 390.8,650.3 393.8,658.1 396.3,663.6 399.2,667.4 402.1,674.0 404.7,678.2 407.2,682.3 410.5,687.1 413.9,692.2 416.4,696.2 418.9,698.8 422.4,702.6 425.6,709.8 427.0,701.2 429.5,689.7 430.9,671.6 432.1,650.5 433.2,634.3 434.6,630.0 437.3,623.8 441.0,617.1 443.3,614.2 445.2,616.5 447.8,621.0 449.3,628.8 451.3,636.0 452.8,638.8 455.4,641.0 458.1,645.7 459.9,650.0 462.6,655.4 464.8,659.3 467.4,662.0 470.1,666.7 474.6,672.5 477.6,676.2 480.6,679.6 485.1,684.2 488.2,686.9 491.1,692.0 492.5,683.6 495.0,672.4 496.4,654.6 497.7,634.1 498.8,618.2 500.2,614.0 502.8,607.9 506.6,601.4 508.9,598.6 510.9,601.0 513.6,605.7 515.3,613.8 517.4,621.3 518.9,624.2 521.7,626.6 524.6,631.4 526.4,635.9 529.3,641.6 531.6,645.6 534.4,648.5 537.2,653.3 542.0,659.4 545.1,663.8 548.3,666.7 553.1,671.6 556.4,674.4 559.4,679.7 560.8,671.7 563.3,660.9 564.7,644.0 565.9,624.3 567.0,609.2 568.4,605.1 571.1,599.3 574.8,593.1 577.1,590.4 579.0,593.2 581.6,598.5 583.1,607.8 585.1,616.3 586.6,619.7 589.2,622.3 591.9,627.9 593.7,633.0 596.4,639.5 598.6,644.1 601.2,647.3 603.9,652.9 608.4,659.9 611.4,664.1 614.4,668.2 618.9,673.7 622.0,677.0 624.9,683.0 626.3,676.0 628.8,666.7 630.2,652.0 631.5,635.0 632.6,621.8 634.0,618.3 636.6,613.2 640.4,607.8 642.7,605.5 644.6,607.8 647.1,612.1 648.5,619.6 650.5,626.5 651.9,629.2 654.4,631.4 657.1,635.9 658.8,640.0 661.4,645.2 663.6,649.0 666.1,651.6 668.7,656.1 673.1,661.8 676.0,665.1 678.9,668.5 683.3,673.0 686.3,675.6 689.1,680.5 690.4,673.4 692.7,664.0 694.0,649.1 695.2,631.8 696.2,618.4 697.5,614.9 699.9,609.8 703.4,604.3 705.5,601.9 707.5,604.4 710.2,609.2 711.7,617.4 713.8,625.1 715.3,628.0 718.0,630.4 720.8,635.4 722.7,639.9 725.5,645.7 727.8,649.9 730.4,652.8 733.2,657.7 737.9,663.9 741.0,667.8 744.1,671.4 748.8,676.3 752.0,679.2 755.0,684.6 756.4,677.2 758.9,667.4 760.3,651.8 761.6,633.8 762.7,619.9 764.1,616.2 766.7,610.9 770.5,605.2 772.8,602.7 774.8,605.4 777.5,610.7 779.2,619.8 781.3,628.2 782.8,631.5 785.6,634.2 788.5,639.6 790.3,644.7 793.2,651.0 795.5,655.6 798.3,658.8 801.1,664.3 805.9,671.1 809.0,674.8 812.2,679.3 817.0,684.8 820.3,688.0 823.3,693.9 824.5,686.2 826.6,676.0 827.8,659.8 828.8,641.1 829.8,626.6 830.9,622.8 833.2,617.2 836.3,611.3 838.3,608.7 840.4,611.2 843.1,616.0 844.8,624.4 846.9,632.0 848.5,635.0 851.3,637.4 854.2,642.4 856.1,647.0 859.0,652.8 861.4,657.0 864.2,659.9 867.0,664.9 871.9,671.2 875.1,675.1 878.3,678.7 883.2,683.7 886.5,686.6 889.6,692.0 890.8,684.6 893.0,674.8 894.3,659.2 895.4,641.2 896.3,627.3 897.6,623.6 899.9,618.3 903.2,612.6 905.2,610.1 907.3,612.7 910.1,617.8 911.7,626.5 913.9,634.6 915.5,637.7 918.3,640.3 921.3,645.5 923.2,650.3 926.2,656.4 928.6,660.8 931.4,663.9 934.3,669.1 939.2,675.6 942.4,678.9 945.7,683.5 950.6,688.8 954.0,691.8 957.1,697.5 958.6,689.5 961.1,678.7 962.6,661.8 963.9,642.1 965.0,627.0 966.4,622.9 969.2,617.1 973.0,610.9 975.4,608.2 977.5,611.1 980.2,616.6 981.9,626.1 984.0,634.9 985.6,638.3 988.4,641.1 991.3,646.8 993.2,652.0 996.1,658.7 998.5,663.5 1001.3,666.8 1004.1,672.5 1009.0,679.7 1012.2,683.6 1015.4,688.3 1020.3,694.0 1023.6,697.3 1026.7,703.5 1027.9,694.9 1030.0,683.5 1031.2,665.4 1032.2,644.4 1033.2,628.2 1034.4,623.9 1036.6,617.7 1039.8,611.1 1041.7,608.2 1043.9,610.9 1046.8,616.3 1048.6,625.4 1050.9,633.8 1052.5,637.1 1055.5,639.8 1058.7,645.3 1060.7,650.3 1063.8,656.7 1066.3,661.3 1069.3,664.5 1072.3,670.0 1074.9,674.1 1077.5,676.8 1080.9,681.4 1084.4,685.1 1087.0,687.3 1089.6,690.6 1093.1,693.8 1096.4,699.7 1097.6,691.8 1099.8,681.2 1101.1,664.4 1102.1,645.0 1103.1,630.0 1104.3,626.1 1106.6,620.3 1109.9,614.1 1111.9,611.5 1114.0,613.6 1116.9,617.6 1118.6,624.6 1120.8,631.0 1122.4,633.5 1125.3,635.5 1128.3,639.7 1130.3,643.5 1133.3,648.4 1134.6,650.2" class="w"/></g></svg></div>
<div class="tk" style="left:1289px;top:539px;width:4px"></div>
<div class="yl" style="left:1294px;top:532px">3</div>
<div class="tk" style="left:1289px;top:561px;width:4px"></div>
<div class="yl" style="left:1294px;top:554px">2.4</div>
<div class="tk" style="left:1289px;top:583px;width:4px"></div>
<div class="yl" style="left:1294px;top:576px">1.8</div>
<div class="tk" style="left:1289px;top:605px;width:4px"></div>
<div class="yl" style="left:1294px;top:598px">1.2</div>
<div class="tk" style="left:1289px;top:627px;width:4px"></div>
<div class="yl" style="left:1294px;top:620px">0.6</div>
<div class="tk" style="left:1289px;top:649px;width:4px"></div>
<div class="yl" style="left:1294px;top:642px">0</div>
<div class="tk" style="left:1289px;top:671px;width:4px"></div>
<div class="yl" style="left:1294px;top:664px">-0.6</div>
<div class="tk" style="left:1289px;top:692px;width:4px"></div>
<div class="yl" style="left:1294px;top:685px">-1.2</div>
<div class="tk" style="left:1289px;top:714px;width:4px"></div>
<div class="yl" style="left:1294px;top:707px">-1.8</div>
<div class="tk" style="left:1289px;top:736px;width:4px"></div>
<div class="yl" style="left:1294px;top:729px">-2.4</div>
<div class="tk" style="left:1289px;top:758px;width:4px"></div>
<div class="yl" style="left:1294px;top:751px">-3</div>
<div class="tkb" style="left:104px;top:759px"></div>
<div class="xl" style="left:84px;top:766px">3</div>
<div class="tkb" style="left:173px;top:759px"></div>
<div class="xl" style="left:153px;top:766px">4</div>
<div class="tkb" style="left:243px;top:759px"></div>
<div class="xl" style="left:223px;top:766px">5</div>
<div class="tkb" style="left:312px;top:759px"></div>
<div class="xl" style="left:292px;top:766px">6</div>
<div class="tkb" style="left:382px;top:759px"></div>
<div class="xl" style="left:362px;top:766px">7</div>
<div class="tkb" style="left:452px;top:759px"></div>
<div class="xl" style="left:432px;top:766px">8</div>
<div class="tkb" style="left:521px;top:759px"></div>
<div class="xl" style="left:501px;top:766px">9</div>
<div class="tkb" style="left:591px;top:759px"></div>
<div class="xl" style="left:571px;top:766px">10</div>
<div class="tkb" style="left:660px;top:759px"></div>
<div class="xl" style="left:640px;top:766px">11</div>
<div class="tkb" style="left:730px;top:759px"></div>
<div class="xl" style="left:710px;top:766px">12</div>
<div class="tkb" style="left:800px;top:759px"></div>
<div class="xl" style="left:780px;top:766px">13</div>
<div class="tkb" style="left:869px;top:759px"></div>
<div class="xl" style="left:849px;top:766px">14</div>
<div class="tkb" style="left:939px;top:759px"></div>
<div class="xl" style="left:919px;top:766px">15</div>
<div class="tkb" style="left:1008px;top:759px"></div>
<div class="xl" style="left:988px;top:766px">16</div>
<div class="tkb" style="left:1078px;top:759px"></div>
<div class="xl" style="left:1058px;top:766px">17</div>
<div class="tkb" style="left:1148px;top:759px"></div>
<div class="xl" style="left:1128px;top:766px">18</div>
<div class="tkb" style="left:1217px;top:759px"></div>
<div class="xl" style="left:1197px;top:766px">19</div>
<div class="tkb" style="left:1287px;top:759px"></div>
<div class="xl" style="left:1267px;top:766px">20</div>
<div class="zval" style="top:39px">零点值: 20.30 hPa</div>
<div class="zval" style="top:291px">零点值: 21.90 hPa</div>
<div class="zval" style="top:545px">零点值: 27.00 hPa</div>
<div id="rpanel"></div>
<div class="gbox" style="top:31px;height:238px"></div>
<div class="gtitle" style="top:25px">通道1静态压力</div>
<div class="disp" style="top:52px"><span style="position:relative;left:0px">99.23</span></div>
<div class="pbtn" style="top:149px"><svg width="17" height="15" viewBox="0 0 17 15"><path d="M5.8 0.6 H14.6 L12.2 6.2 H3.2 Z" fill="#fff" stroke="#000" stroke-width="1.2"/><path d="M6.8 2.6 H11.3 M5.6 4.5 H10.2" stroke="#000" stroke-width="1.1"/><path d="M3 6.6 H13.5 Q16.2 6.6 16.2 10 Q16.2 14.2 13 14.2 H3.5 Q0.7 14.2 0.7 10.3 Q0.7 6.6 3 6.6 Z" fill="#fff" stroke="#000" stroke-width="1.3"/><path d="M1.2 8.8 H13.8 M1.2 11.9 H13.8" stroke="#000" stroke-width="1"/><rect x="1.4" y="9.5" width="12" height="1.8" fill="#d4dcaa"/><path d="M14.2 7.6 h1 v1 h-1z M14.2 9.6 h1 v1 h-1z M14.2 11.6 h1 v1 h-1z M13.2 8.6 h1 v1 h-1z M13.2 10.6 h1 v1 h-1z" fill="#000"/></svg></div>
<div class="chk" style="left:1402px;top:152px"></div><div class="txt" style="left:1419px;top:151px;margin-top:2px">静态压力曲线</div><div class="gbox" style="top:283px;height:238px"></div>
<div class="gtitle" style="top:277px">通道2静态压力</div>
<div class="disp" style="top:303px"><span style="position:relative;left:-7px">102.08</span></div>
<div class="pbtn" style="top:401px"><svg width="17" height="15" viewBox="0 0 17 15"><path d="M5.8 0.6 H14.6 L12.2 6.2 H3.2 Z" fill="#fff" stroke="#000" stroke-width="1.2"/><path d="M6.8 2.6 H11.3 M5.6 4.5 H10.2" stroke="#000" stroke-width="1.1"/><path d="M3 6.6 H13.5 Q16.2 6.6 16.2 10 Q16.2 14.2 13 14.2 H3.5 Q0.7 14.2 0.7 10.3 Q0.7 6.6 3 6.6 Z" fill="#fff" stroke="#000" stroke-width="1.3"/><path d="M1.2 8.8 H13.8 M1.2 11.9 H13.8" stroke="#000" stroke-width="1"/><rect x="1.4" y="9.5" width="12" height="1.8" fill="#d4dcaa"/><path d="M14.2 7.6 h1 v1 h-1z M14.2 9.6 h1 v1 h-1z M14.2 11.6 h1 v1 h-1z M13.2 8.6 h1 v1 h-1z M13.2 10.6 h1 v1 h-1z" fill="#000"/></svg></div><div class="gbox" style="top:535px;height:238px"></div>
<div class="gtitle" style="top:529px">通道3静态压力</div>
<div class="disp" style="top:555px"><span style="position:relative;left:0px">97.63</span></div>
<div class="pbtn" style="top:653px"><svg width="17" height="15" viewBox="0 0 17 15"><path d="M5.8 0.6 H14.6 L12.2 6.2 H3.2 Z" fill="#fff" stroke="#000" stroke-width="1.2"/><path d="M6.8 2.6 H11.3 M5.6 4.5 H10.2" stroke="#000" stroke-width="1.1"/><path d="M3 6.6 H13.5 Q16.2 6.6 16.2 10 Q16.2 14.2 13 14.2 H3.5 Q0.7 14.2 0.7 10.3 Q0.7 6.6 3 6.6 Z" fill="#fff" stroke="#000" stroke-width="1.3"/><path d="M1.2 8.8 H13.8 M1.2 11.9 H13.8" stroke="#000" stroke-width="1"/><rect x="1.4" y="9.5" width="12" height="1.8" fill="#d4dcaa"/><path d="M14.2 7.6 h1 v1 h-1z M14.2 9.6 h1 v1 h-1z M14.2 11.6 h1 v1 h-1z M13.2 8.6 h1 v1 h-1z M13.2 10.6 h1 v1 h-1z" fill="#000"/></svg></div>
<div id="tbar"></div>
<div class="txt" style="left:732px;top:787px">时间&nbsp; 单位 秒</div>
<div class="nbtn" style="left:1187px;width:29px">&lt;-</div>
<div class="nbtn" style="left:1219px;width:22px">-</div>
<div class="nbtn" style="left:1244px;width:23px">+</div>
<div class="nbtn" style="left:1270px;width:26px">-&gt;</div>
<div class="nbtn" style="left:1299px;width:29px"><svg width="16" height="12" viewBox="0 0 16 12" style="position:absolute;left:6px;top:4px"><path d="M1.5 0 V5.5 M2 2.7 H14.5" stroke="#000" stroke-width="1.5" fill="none"/><path d="M2 2.7 L6 0 V5.4 Z" fill="#000"/><path d="M14.5 6.5 V12 M1 9.3 H14" stroke="#000" stroke-width="1.5" fill="none"/><path d="M14 9.3 L10 6.6 V12 Z" fill="#000"/></svg></div>
<div class="txt" style="left:27px;top:812px;font-size:13px;letter-spacing:0.8px">3563</div>
<div class="txt" style="left:208px;top:812px;font-size:13px">0</div>
<div class="chk" style="left:26px;top:839px"></div>
<div class="txt" style="left:43px;top:838px">记录数据</div>
<div class="sbtn2" style="left:98px;width:40px">保存</div>
<div class="sbtn2" style="left:146px;width:40px">载入</div>
<div class="sbtn2" style="left:194px;width:49px">模拟</div>
<div class="a" style="left:834px;top:808px;width:16px;height:72px;background:#f4f4f4;border-left:1px solid #e8e8e8"></div>
<div class="a" style="left:838px;top:814px;border-left:4px solid transparent;border-right:4px solid transparent;border-bottom:4px solid #a8a8a8"></div>
<div class="a" style="left:838px;top:869px;border-left:4px solid transparent;border-right:4px solid transparent;border-top:4px solid #a8a8a8"></div>
<div class="grp" style="left:851px;top:815px;width:159px;height:63px"></div>
<div class="a" style="left:856px;top:808px;width:52px;height:16px;background:#f0f0f0"></div>
<div class="txt" style="left:858px;top:809px">采样设置</div>
<div class="txt" style="left:865px;top:836px">单位:</div>
<div class="combo" style="left:902px;top:830px;width:101px;font-size:12px;line-height:22px">毫米汞柱</div>
<div class="grp" style="left:1011px;top:815px;width:524px;height:63px"></div>
<div class="a" style="left:1016px;top:808px;width:52px;height:16px;background:#f0f0f0"></div>
<div class="txt" style="left:1018px;top:809px">设备操作</div>
<div class="txt" style="left:1037px;top:834px">串口号</div>
<div class="combo" style="left:1082px;top:830px;width:77px">2</div>
<div class="txt" style="left:1039px;top:861px">波特率</div>
<div class="combo" style="left:1082px;top:858px;width:78px;font-size:13.5px">256000</div>
<div class="btn" style="left:1174px;top:831px;width:72px;border:2px solid #3c9cd0;background:linear-gradient(#e6f6fd,#d6f0fc 50%,#bce6fa 51%,#a8dcf6)">打开设备</div>
<div class="btn" style="left:1247px;top:831px;width:72px;border-color:#adb2b5;background:#f4f4f4;color:#838383">停止采样</div>
<div class="btn" style="left:1333px;top:831px;width:57px">校零</div>
<div class="btn" style="left:1394px;top:831px;width:52px">零点值</div>
<div class="btn" style="left:1454px;top:831px;width:72px">退出</div>
<div id="status"></div>
<div class="a" style="left:148px;top:882px;width:2px;height:18px;border-left:1px solid #d4d4d4;border-right:1px solid #fafafa"></div><div class="a" style="left:298px;top:882px;width:2px;height:18px;border-left:1px solid #d4d4d4;border-right:1px solid #fafafa"></div><div class="a" style="left:449px;top:882px;width:2px;height:18px;border-left:1px solid #d4d4d4;border-right:1px solid #fafafa"></div><div class="a" style="left:598px;top:882px;width:2px;height:18px;border-left:1px solid #d4d4d4;border-right:1px solid #fafafa"></div>
<div class="st" style="left:2px">串口关闭</div>
<div class="st" style="left:154px;letter-spacing:0.2px">F0 2F 01 31 51</div>
<div class="st" style="left:303px">开始采样指令已发送</div>
<div class="st" style="left:454px">启动采样！</div>
<div class="st" style="left:980px;letter-spacing:0.3px">当前时间：2022-04-27 10:58:22</div>
<div class="a" style="left:213px;top:770px;width:65px;height:65px">
<svg width="65" height="65" viewBox="0 0 65 65"><circle cx="32.4" cy="32.7" r="32" fill="rgba(255,255,255,.45)"/><circle cx="32.4" cy="32.7" r="28.5" fill="#f4fbf6" stroke="#3cc864" stroke-width="1.2"/><path d="M32.4 2.7 A30 30 0 0 1 37.9 62.2" fill="none" stroke="#34c85a" stroke-width="4"/></svg>
<div class="a" style="left:12px;top:14px;font-size:23px;line-height:24px;color:#505050;letter-spacing:-0.5px">47<span style="font-size:13px;position:relative;top:1px">%</span></div>
<svg class="a" style="left:12px;top:43px" width="6" height="9" viewBox="0 0 6 9"><path d="M3 0 V7" stroke="#2a9a3a" stroke-width="1.3"/><path d="M0.3 4.8 L3 8.6 L5.7 4.8 Z" fill="#2a9a3a"/></svg><div class="a" style="left:18px;top:42px;font-size:9.5px;line-height:10px;color:#404040;white-space:nowrap;letter-spacing:-0.3px">0.09K/s</div>
</div>
</body></html>
